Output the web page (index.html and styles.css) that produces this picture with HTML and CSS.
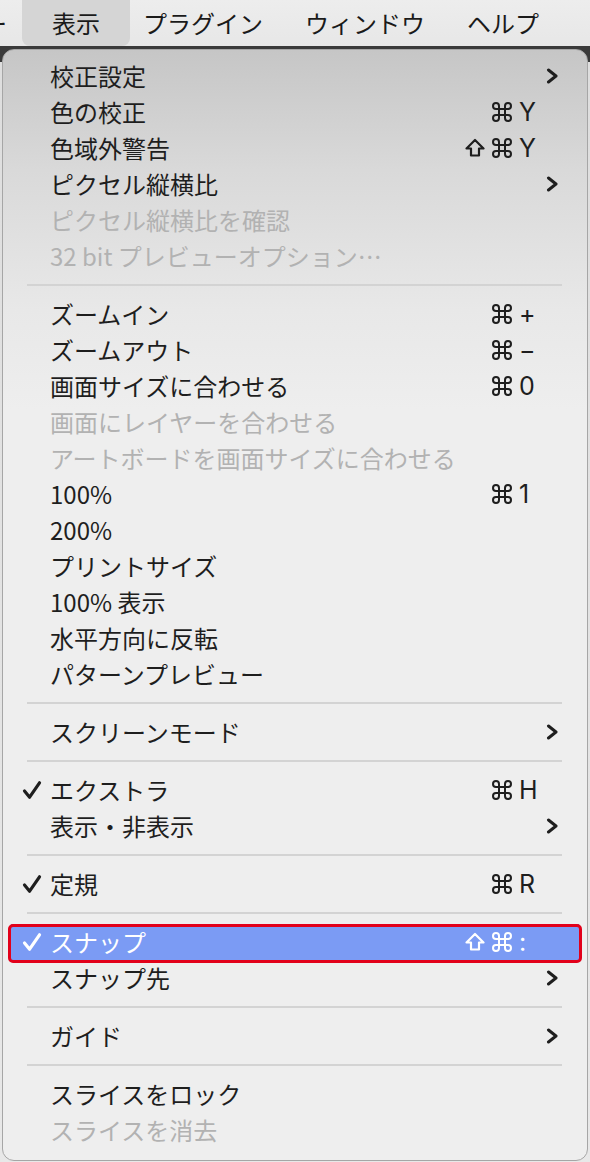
FILE: index.html
```html
<!DOCTYPE html>
<html lang="ja">
<head>
<meta charset="utf-8">
<link rel="stylesheet" href="styles.css">
</head>
<body>
<div class="menubar">
  <span class="mb-cut">ー</span>
  <span class="mb-item active">表示</span>
  <span class="mb-item">プラグイン</span>
  <span class="mb-item">ウィンドウ</span>
  <span class="mb-item">ヘルプ</span>
</div>
<div class="stage">
  <div class="menu">
    <div class="row"><span class="chk"></span><span class="lbl">校正設定</span><span class="sc"></span><span class="sub"><svg viewBox="0 0 12 16" width="12" height="16"><path d="M2.5 2 L10 8 L2.5 14" /></svg></span></div>
    <div class="row"><span class="chk"></span><span class="lbl">色の校正</span><span class="sc"><span class="mods"><svg class="cmd" viewBox="0 0 20 20" width="20" height="20"><path d="M7 7 V4 A3 3 0 1 0 4 7 H16 A3 3 0 1 0 13 4 V16 A3 3 0 1 0 16 13 H4 A3 3 0 1 0 7 16 Z"/></svg></span><span class="key">Y</span></span><span class="sub"></span></div>
    <div class="row"><span class="chk"></span><span class="lbl">色域外警告</span><span class="sc"><span class="mods"><svg class="shift" viewBox="0 0 20 20" width="20" height="20"><path d="M10 2 L18.5 10.5 H14 V17.5 H6 V10.5 H1.5 Z"/></svg><svg class="cmd" viewBox="0 0 20 20" width="20" height="20"><path d="M7 7 V4 A3 3 0 1 0 4 7 H16 A3 3 0 1 0 13 4 V16 A3 3 0 1 0 16 13 H4 A3 3 0 1 0 7 16 Z"/></svg></span><span class="key">Y</span></span><span class="sub"></span></div>
    <div class="row"><span class="chk"></span><span class="lbl">ピクセル縦横比</span><span class="sc"></span><span class="sub"><svg viewBox="0 0 12 16" width="12" height="16"><path d="M2.5 2 L10 8 L2.5 14" /></svg></span></div>
    <div class="row dis"><span class="chk"></span><span class="lbl">ピクセル縦横比を確認</span><span class="sc"></span><span class="sub"></span></div>
    <div class="row dis"><span class="chk"></span><span class="lbl">32 bit プレビューオプション…</span><span class="sc"></span><span class="sub"></span></div>
    <div class="sep"></div>
    <div class="row"><span class="chk"></span><span class="lbl">ズームイン</span><span class="sc"><span class="mods"><svg class="cmd" viewBox="0 0 20 20" width="20" height="20"><path d="M7 7 V4 A3 3 0 1 0 4 7 H16 A3 3 0 1 0 13 4 V16 A3 3 0 1 0 16 13 H4 A3 3 0 1 0 7 16 Z"/></svg></span><span class="key">+</span></span><span class="sub"></span></div>
    <div class="row"><span class="chk"></span><span class="lbl">ズームアウト</span><span class="sc"><span class="mods"><svg class="cmd" viewBox="0 0 20 20" width="20" height="20"><path d="M7 7 V4 A3 3 0 1 0 4 7 H16 A3 3 0 1 0 13 4 V16 A3 3 0 1 0 16 13 H4 A3 3 0 1 0 7 16 Z"/></svg></span><span class="key">−</span></span><span class="sub"></span></div>
    <div class="row"><span class="chk"></span><span class="lbl">画面サイズに合わせる</span><span class="sc"><span class="mods"><svg class="cmd" viewBox="0 0 20 20" width="20" height="20"><path d="M7 7 V4 A3 3 0 1 0 4 7 H16 A3 3 0 1 0 13 4 V16 A3 3 0 1 0 16 13 H4 A3 3 0 1 0 7 16 Z"/></svg></span><span class="key">0</span></span><span class="sub"></span></div>
    <div class="row dis"><span class="chk"></span><span class="lbl">画面にレイヤーを合わせる</span><span class="sc"></span><span class="sub"></span></div>
    <div class="row dis"><span class="chk"></span><span class="lbl">アートボードを画面サイズに合わせる</span><span class="sc"></span><span class="sub"></span></div>
    <div class="row"><span class="chk"></span><span class="lbl">100%</span><span class="sc"><span class="mods"><svg class="cmd" viewBox="0 0 20 20" width="20" height="20"><path d="M7 7 V4 A3 3 0 1 0 4 7 H16 A3 3 0 1 0 13 4 V16 A3 3 0 1 0 16 13 H4 A3 3 0 1 0 7 16 Z"/></svg></span><span class="key">1</span></span><span class="sub"></span></div>
    <div class="row"><span class="chk"></span><span class="lbl">200%</span><span class="sc"></span><span class="sub"></span></div>
    <div class="row"><span class="chk"></span><span class="lbl">プリントサイズ</span><span class="sc"></span><span class="sub"></span></div>
    <div class="row"><span class="chk"></span><span class="lbl">100% 表示</span><span class="sc"></span><span class="sub"></span></div>
    <div class="row"><span class="chk"></span><span class="lbl">水平方向に反転</span><span class="sc"></span><span class="sub"></span></div>
    <div class="row"><span class="chk"></span><span class="lbl">パターンプレビュー</span><span class="sc"></span><span class="sub"></span></div>
    <div class="sep"></div>
    <div class="row"><span class="chk"></span><span class="lbl">スクリーンモード</span><span class="sc"></span><span class="sub"><svg viewBox="0 0 12 16" width="12" height="16"><path d="M2.5 2 L10 8 L2.5 14" /></svg></span></div>
    <div class="sep"></div>
    <div class="row"><span class="chk"><svg viewBox="0 0 20 20" width="20" height="20"><path d="M2.5 11 L7.6 17.2 L17.5 2.8" /></svg></span><span class="lbl">エクストラ</span><span class="sc"><span class="mods"><svg class="cmd" viewBox="0 0 20 20" width="20" height="20"><path d="M7 7 V4 A3 3 0 1 0 4 7 H16 A3 3 0 1 0 13 4 V16 A3 3 0 1 0 16 13 H4 A3 3 0 1 0 7 16 Z"/></svg></span><span class="key">H</span></span><span class="sub"></span></div>
    <div class="row"><span class="chk"></span><span class="lbl">表示・非表示</span><span class="sc"></span><span class="sub"><svg viewBox="0 0 12 16" width="12" height="16"><path d="M2.5 2 L10 8 L2.5 14" /></svg></span></div>
    <div class="sep"></div>
    <div class="row"><span class="chk"><svg viewBox="0 0 20 20" width="20" height="20"><path d="M2.5 11 L7.6 17.2 L17.5 2.8" /></svg></span><span class="lbl">定規</span><span class="sc"><span class="mods"><svg class="cmd" viewBox="0 0 20 20" width="20" height="20"><path d="M7 7 V4 A3 3 0 1 0 4 7 H16 A3 3 0 1 0 13 4 V16 A3 3 0 1 0 16 13 H4 A3 3 0 1 0 7 16 Z"/></svg></span><span class="key">R</span></span><span class="sub"></span></div>
    <div class="sep"></div>
    <div class="row hl"><span class="chk"><svg viewBox="0 0 20 20" width="20" height="20"><path d="M2.5 11 L7.6 17.2 L17.5 2.8" /></svg></span><span class="lbl">スナップ</span><span class="sc"><span class="mods"><svg class="shift" viewBox="0 0 20 20" width="20" height="20"><path d="M10 2 L18.5 10.5 H14 V17.5 H6 V10.5 H1.5 Z"/></svg><svg class="cmd" viewBox="0 0 20 20" width="20" height="20"><path d="M7 7 V4 A3 3 0 1 0 4 7 H16 A3 3 0 1 0 13 4 V16 A3 3 0 1 0 16 13 H4 A3 3 0 1 0 7 16 Z"/></svg></span><span class="key">:</span></span><span class="sub"></span></div>
    <div class="row"><span class="chk"></span><span class="lbl">スナップ先</span><span class="sc"></span><span class="sub"><svg viewBox="0 0 12 16" width="12" height="16"><path d="M2.5 2 L10 8 L2.5 14" /></svg></span></div>
    <div class="sep"></div>
    <div class="row"><span class="chk"></span><span class="lbl">ガイド</span><span class="sc"></span><span class="sub"><svg viewBox="0 0 12 16" width="12" height="16"><path d="M2.5 2 L10 8 L2.5 14" /></svg></span></div>
    <div class="sep"></div>
    <div class="row"><span class="chk"></span><span class="lbl">スライスをロック</span><span class="sc"></span><span class="sub"></span></div>
    <div class="row dis"><span class="chk"></span><span class="lbl">スライスを消去</span><span class="sc"></span><span class="sub"></span></div>
  </div>
</div>
</body>
</html>
```
FILE: styles.css
```css
html, body {
  margin: 0;
  padding: 0;
}
body {
  width: 590px;
  height: 1162px;
  overflow: hidden;
  background: #e4e4e4;
  font-family: "Noto Sans CJK JP", sans-serif;
  color: #1e1e1e;
}
.menubar {
  height: 46px;
  display: flex;
  align-items: center;
  background: linear-gradient(#ededed, #e7e7e7);
  font-size: 24px;
  line-height: 46px;
  color: #1a1a1a;
  white-space: nowrap;
}
.mb-cut {
  margin-left: -17px;
  margin-right: 15px;
}
.mb-item {
  margin-right: 42px;
}
.mb-item.active {
  padding: 0 30px;
  margin-right: 13px;
  background: #d5d5d5;
  border-radius: 0 0 8px 8px;
}
.stage {
  height: 1116px;
  padding: 3px 2px 0 2px;
  box-sizing: border-box;
  background: linear-gradient(#3a3a3a 0, #3a3a3a 16px, #dedede 16px, #e8e8e8 100%);
}
.menu {
  border: 1px solid #a6a6a6;
  border-radius: 12px;
  padding: 8px 0 12px;
  background: linear-gradient(#c6c6c6 0, #d9d9d9 120px, #e8e8e8 260px, #eeeeee 360px, #eeeeee 100%);
}
.row {
  position: relative;
  height: 36px;
  margin: 0 8px;
  padding-right: 21px;
  display: grid;
  grid-template-columns: 39px 1fr auto 14px;
  align-items: center;
  font-size: 24px;
  line-height: 36px;
  white-space: nowrap;
}
.row.dis {
  color: #b2b2b2;
}
.chk {
  display: flex;
  align-items: center;
  padding-left: 11px;
  height: 36px;
}
.chk svg path {
  fill: none;
  stroke: #1e1e1e;
  stroke-width: 3.2;
  stroke-linecap: round;
  stroke-linejoin: round;
}
.lbl {
  display: block;
}
.sc {
  display: flex;
  align-items: center;
  height: 36px;
}
.mods {
  display: flex;
  align-items: center;
  gap: 7px;
}
.mods svg {
  display: block;
}
.mods svg path {
  fill: none;
  stroke: #1e1e1e;
  stroke-width: 2;
  stroke-linejoin: round;
}
.mods svg.shift path {
  stroke-width: 2.2;
}
.key {
  width: 25px;
  padding-left: 7px;
  font-family: Inter, "Liberation Sans", sans-serif;
  font-size: 25px;
  line-height: 36px;
}
.sub {
  display: flex;
  align-items: center;
  justify-content: flex-end;
  height: 36px;
}
.sub svg path {
  fill: none;
  stroke: #1e1e1e;
  stroke-width: 3;
  stroke-linecap: round;
  stroke-linejoin: round;
}
.sep {
  height: 22px;
  display: flex;
  align-items: center;
  margin: 0 25px 0 24px;
}
.sep::before {
  content: "";
  display: block;
  width: 100%;
  height: 2px;
  background: #d3d3d3;
}
.row.hl {
  background: #7b9bf4;
  color: #ffffff;
}
.row.hl .chk svg path,
.row.hl .mods svg path {
  stroke: #ffffff;
}
.row.hl::after {
  content: "";
  position: absolute;
  top: 0;
  bottom: -3px;
  left: -3px;
  right: -3px;
  border: 3px solid #e2001a;
  border-radius: 5px;
  pointer-events: none;
}
```
